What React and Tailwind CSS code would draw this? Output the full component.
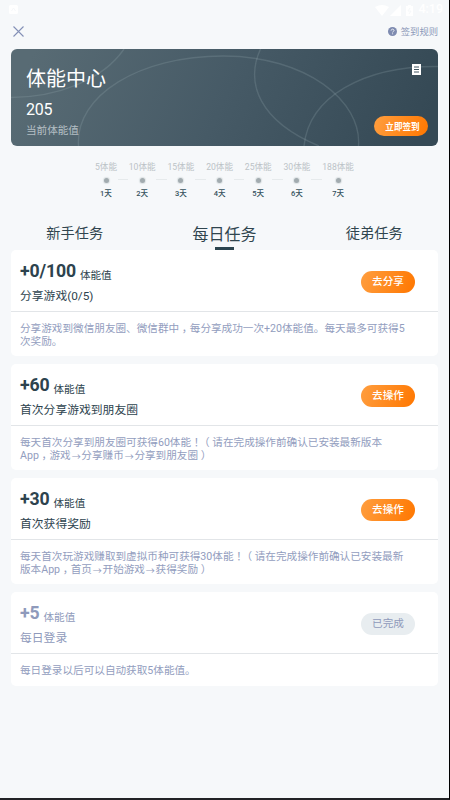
import React from "react";

const STEPS = [
  { reward: "5体能", day: "1天", width: "w-[23px]" },
  { reward: "10体能", day: "2天", width: "w-[28px]" },
  { reward: "15体能", day: "3天", width: "w-[28px]" },
  { reward: "20体能", day: "4天", width: "w-[28px]" },
  { reward: "25体能", day: "5天", width: "w-[28px]" },
  { reward: "30体能", day: "6天", width: "w-[28px]" },
  { reward: "188体能", day: "7天", width: "w-[33px]" },
];

const TASKS = [
  {
    amount: "+0/100",
    title: "分享游戏(0/5)",
    action: "去分享",
    lines: ["分享游戏到微信朋友圈、微信群中，每分享成功一次+20体能值。每天最多可获得5", "次奖励。"],
  },
  {
    amount: "+60",
    title: "首次分享游戏到朋友圈",
    action: "去操作",
    lines: ["每天首次分享到朋友圈可获得60体能！（请在完成操作前确认已安装最新版本", "App，游戏→分享赚币→分享到朋友圈）"],
  },
  {
    amount: "+30",
    title: "首次获得奖励",
    action: "去操作",
    lines: ["每天首次玩游戏赚取到虚拟币种可获得30体能！（请在完成操作前确认已安装最新", "版本App，首页→开始游戏→获得奖励）"],
  },
  {
    amount: "+5",
    title: "每日登录",
    action: "已完成",
    done: true,
    lines: ["每日登录以后可以自动获取5体能值。"],
  },
];

// full-width marks sit in the middle of their cell
const PUNCTUATION = {
  "，": "inline-block w-[1em] text-center [font-feature-settings:'halt']",
  "！": "inline-block w-[1em] text-center [font-feature-settings:'halt']",
  "（": "inline-block w-[1em] text-center [font-feature-settings:'halt']",
  "）": "inline-block w-[1em] text-center [font-feature-settings:'halt']",
  "→": "inline-block translate-y-[1.5px] scale-[0.85]",
};

const Line = ({ text }) => (
  <p className="whitespace-nowrap">
    {text.split(/([，！（）→])/).map((part, i) =>
      PUNCTUATION[part] ? (
        <span key={i} className={PUNCTUATION[part]}>{part}</span>
      ) : (
        part
      )
    )}
  </p>
);

const StatusBar = () => (
  <div className="flex h-[19px] items-center justify-between pl-[9px] pr-[6px] text-white">
    <svg className="h-[9px] w-[9px]" viewBox="0 0 9 9">
      <rect width="9" height="9" rx="1.5" fill="#fff" />
      <path d="M2.5 6 4.5 3 6.5 6" fill="none" stroke="#f6f8fa" />
    </svg>
    <div className="flex items-center">
      <svg className="h-[12px] w-[40px]" viewBox="0 0 40 12" fill="#fff">
        <path d="M0 3Q7-1 14 3L7 12Z" />
        <path d="M26 1V12H15Z" />
        <path d="M31 2h2V1h3v1h2v10h-7Z" />
        <path d="M35 4 33 7h3l-2 3" fill="none" stroke="#f6f8fa" />
      </svg>
      <span className="ml-[3px] text-[12.5px] font-medium leading-none">4:19</span>
    </div>
  </div>
);

const Header = () => (
  <div className="flex h-[30px] items-center justify-between pb-[5px] pl-[13px] pr-[11px] text-[#8d98b9]">
    <svg className="h-[11px] w-[11px]" viewBox="0 0 11 11" stroke="#8490b6" strokeWidth="1.1">
      <path d="M.5.5l10 10M10.5.5l-10 10" />
    </svg>
    <div className="flex items-center gap-[4px]">
      <svg className="h-[9px] w-[9px]" viewBox="0 0 9 9">
        <circle cx="4.5" cy="4.5" r="4.5" fill="#7e8bb0" />
        <path d="M3.1 3.6c0-2 2.9-1.8 2.9-.1 0 1-1.4 1-1.4 2M4.6 6.3v1" fill="none" stroke="#f6f8fa" strokeWidth=".9" />
      </svg>
      <span className="text-[9.3px] leading-none">签到规则</span>
    </div>
  </div>
);

const Banner = () => (
  <div className="relative ml-[11px] flex h-[97px] w-[427px] justify-between overflow-hidden rounded-[6px] bg-linear-[114deg,#586b74_5%,#465a66_50%,#354955_95%] text-white">
    <svg className="absolute inset-0 h-[97px] w-[427px]" viewBox="0 0 427 97" fill="none" stroke="#a5b8bf" strokeOpacity=".2" strokeWidth="1.4">
      <path d="M0 48.5C45 48 91 32 113 0" />
      <path d="M67.500 97C64 46 129 7 212 7S351 52 347.500 97" />
      <path d="M249.500 0C234 34 248 72 308 97" />
      <path d="M293 97C298 48 352 17 427 17.500" />
    </svg>
    <div className="relative pl-[15px] pt-[19px]">
      <h1 className="text-[20px] leading-[22px]">体能中心</h1>
      <p className="mt-[11px] text-[16px] leading-[18px] tracking-[-0.3px]">205</p>
      <p className="mt-[5px] text-[10.6px] leading-[14px] text-[#b4bfc4]">当前体能值</p>
    </div>
    <div className="relative flex flex-col items-end justify-between pb-[10px] pr-[10px] pt-[15px]">
      <svg className="mr-[7px] h-[11px] w-[9px]" viewBox="0 0 9 11">
        <path d="M0 0h9v11H0Z" fill="#fff" />
        <path d="M2 3h5M2 5.500h5M2 8h5" stroke="#435762" />
      </svg>
      <button className="flex h-[20px] w-[54px] items-center justify-center rounded-full bg-linear-[110deg,#ff9e3f,#ff7700] pl-[3px] pt-[2px] text-[8.6px] font-bold leading-none">
        立即签到
      </button>
    </div>
  </div>
);

const Steps = () => (
  <div className="flex h-[76px] items-start pl-[94.500px] pt-[15px]">
    {STEPS.map((step, i) => (
      <React.Fragment key={step.day}>
        {i > 0 && <div className="mt-[18px] h-px w-[10.700px] bg-[#e6eaec]" />}
        <div className={`flex flex-col items-center ${step.width}`}>
          <span className="whitespace-nowrap text-[8.6px] leading-[13px] text-[#bcc3c7]">{step.reward}</span>
          <span className="mt-[4px] h-[5px] w-[5px] rounded-full bg-[#a2abaf] shadow-[0_0_1px_1px_#dde2e4]" />
          <span className="mt-[5px] whitespace-nowrap text-[7.500px] font-medium leading-[12px] text-[#34505c]">{step.day}</span>
        </div>
      </React.Fragment>
    ))}
  </div>
);

const Tabs = () => (
  <div className="flex h-[28px] text-[14.200px] text-[#30454f]">
    <div className="w-[149.500px] text-center leading-[22px]">新手任务</div>
    <div className="flex w-[150px] flex-col items-center text-[16px] leading-[25px]">
      每日任务
      <span className="h-[2.500px] w-[19px] bg-[#2c444f]" />
    </div>
    <div className="w-[149.500px] text-center leading-[22px]">徒弟任务</div>
  </div>
);

const TaskCard = ({ task }) => (
  <div className={`w-[427px] rounded-[5px] bg-white ${task.done ? "h-[94px] text-[#8f9abb]" : "h-[106px] text-[#2d434e]"}`}>
    <div className="flex h-[62px] justify-between border-b border-[#e2e5e8] pl-[9px] pr-[23px]">
      <div className="pt-[11px]">
        <div className="flex h-[20px] leading-[20px]">
          <span className="text-[17.700px] font-bold tracking-[-0.15px]">{task.amount}</span>
          <span className="ml-[4px] pt-[5px] text-[10.600px]">体能值</span>
        </div>
        <p className="mt-[7px] text-[11.800px] leading-[16px]">{task.title}</p>
      </div>
      <button
        className={`mt-[21px] h-[22px] w-[54px] rounded-full text-[10.600px] leading-[22px] ${
          task.done ? "bg-[#e8edf0] text-[#8f9abb]" : "bg-linear-[110deg,#ff9e3f,#ff7700] font-medium text-white"
        }`}
      >
        {task.action}
      </button>
    </div>
    <div className="pl-[9px] pt-[11px] text-[10.620px] leading-[12.700px] text-[#929dbe]">
      {task.lines.map((line) => (
        <Line key={line} text={line} />
      ))}
    </div>
  </div>
);

export default function App() {
  return (
    <div className="h-[800px] w-[450px] overflow-hidden border-b-2 border-r border-b-[#222226] border-r-black bg-[#f6f8fa] font-[Roboto,'Noto_Sans_CJK_SC',sans-serif]">
      <StatusBar />
      <Header />
      <Banner />
      <Steps />
      <Tabs />
      <div className="flex flex-col gap-[8px] pl-[11px]">
        {TASKS.map((task) => (
          <TaskCard key={task.title} task={task} />
        ))}
      </div>
    </div>
  );
}
